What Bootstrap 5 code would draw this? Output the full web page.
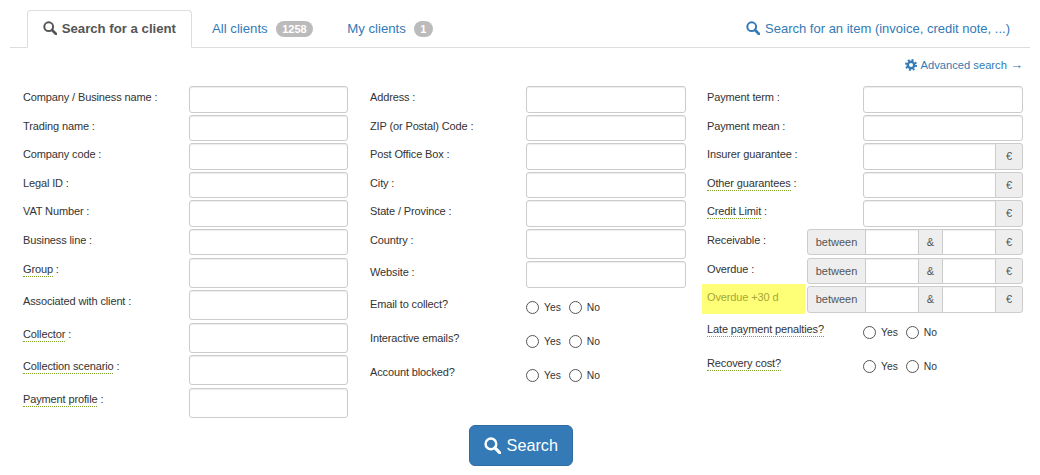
<!DOCTYPE html>
<html lang="en">
<head>
  <meta charset="UTF-8">
  <title>Search for a client</title>
  <link href="https://cdn.jsdelivr.net/npm/bootstrap@5.3.3/dist/css/bootstrap.min.css" rel="stylesheet">
  <style>
    body { font-family: "Liberation Sans", Arial, sans-serif; font-size: 12px; color: #333; background: #fff; }
    a { text-decoration: none; }
    .page-wrap { padding: 10px 10px 0; }

    .client-tabs { padding-left: 17px; border-bottom: 1px solid #ddd; font-size: 13.2px; height: 38px; }
    .client-tabs .nav-link { padding: 9px 15px 11px; line-height: 18px; height: 38px; color: #337ab7; margin: 0 2px 0 0; border-radius: 4px 4px 0 0; }
    .client-tabs .nav-link.active { color: #555; font-weight: 700; border-color: #ddd #ddd #fff; margin-right: 4px; }
    .client-tabs .item-link { margin-right: 0; padding-right: 19px; font-size: 13px; }
    .count-pill { background: #bbb; color: #fff; font-size: 11px; font-weight: 700; padding: 2px 6.5px; border-radius: 8px; line-height: 12px; display: inline-block; margin-left: 8px; vertical-align: 0; }
    .tab-ico { width: 14px; height: 14px; vertical-align: -2px; margin-right: 1px; }

    .adv-row { text-align: right; font-size: 11.2px; line-height: 14px; padding: 10px 7px 0 0; height: 38px; }
    .adv-row a { color: #337ab7; }
    .adv-arrow { font-size: 13px; line-height: 12px; }
    .gear-ico { width: 12px; height: 12px; vertical-align: -2px; margin-right: 1px; }

    .form-cols { display: flex; }
    .col-a { width: 347px; padding-left: 13px; padding-right: 9px; }
    .col-b { width: 337px; padding-left: 13px; padding-right: 8px; }
    .col-c { width: 326px; padding-left: 13px; }

    .fld-row { display: flex; margin-bottom: 2.1px; height: 26.5px; }
    .fld-row.tall { height: 30.25px; margin-bottom: 2.25px; }
    .col-a .fld-lbl { width: 166px; }
    .col-b .fld-lbl, .col-c .fld-lbl { width: 156px; }
    .col-c .fld-lbl.short { width: 100px; }
    .fld-lbl { flex: none; padding-top: 4px; line-height: 14px; font-size: 11px; letter-spacing: -.13px; color: #333; }
    .fld-row .form-control { height: 100%; padding: 2px 6px; font-size: 12px; border-color: #ccc; border-radius: 3px; box-shadow: inset 0 1px 1px rgba(0,0,0,.075); min-height: 0; }
    .fld-box { width: 160px; flex: none; }
    .col-a .fld-box { width: 159px; }
    .dot-tip { border-bottom: 1px dotted #7fa52a; padding-bottom: 1px; }

    .input-group { height: 100%; flex-wrap: nowrap; }
    .input-group-text { background: #eee; color: #555; border-color: #ccc; font-size: 11px; padding: 0; justify-content: center; border-radius: 3px; }
    .euro-cell { width: 28px; flex: none; }
    .btw-cell { width: 59px; flex: none; }
    .and-cell { width: 25px; flex: none; }
    .range-box { width: 216px; flex: none; }
    .col-c .fld-lbl.yellow-lbl { background: #ffff77; color: #a6a63a; margin-left: -5px; padding-left: 5px; width: 103px; margin-right: 2px; margin-top: -2.5px; height: 30px; padding-top: 6px; }

    .radio-row { display: flex; height: 34px; }
    .radio-row .fld-lbl { padding-top: 0; }
    .radio-set { display: flex; align-items: center; height: 14px; margin-top: 4px; font-size: 10.3px; }
    .radio-set .form-check-input { width: 13px; height: 13px; margin: 0 5px 0 0; border: 1px solid #555; }
    .radio-set span { margin-right: 8px; }

    .first-radio { margin-top: 9px; }

    .submit-row { text-align: center; margin-top: 4.5px; }
    .go-btn { width: 104px; height: 41px; font-size: 16.2px; padding: 0; background: #337ab7; border-color: #2e6da4; border-radius: 6px; margin-left: 2px; }
    .go-ico { width: 17px; height: 17px; vertical-align: -3px; margin-right: 1px; }
  </style>
</head>
<body>
<div class="page-wrap">

  <ul class="nav nav-tabs client-tabs">
    <li class="nav-item">
      <a class="nav-link active" href="#">
        <svg class="tab-ico" viewBox="0 0 14 14"><circle cx="5.7" cy="5.7" r="4.4" fill="none" stroke="#555" stroke-width="2"/><path d="M9 9l4 4" stroke="#555" stroke-width="2.6" stroke-linecap="round"/></svg>
        Search for a client</a>
    </li>
    <li class="nav-item"><a class="nav-link" href="#">All clients<span class="count-pill">1258</span></a></li>
    <li class="nav-item"><a class="nav-link" href="#">My clients<span class="count-pill">1</span></a></li>
    <li class="nav-item ms-auto">
      <a class="nav-link item-link" href="#">
        <svg class="tab-ico" viewBox="0 0 14 14"><circle cx="5.7" cy="5.7" r="4.4" fill="none" stroke="#337ab7" stroke-width="2"/><path d="M9 9l4 4" stroke="#337ab7" stroke-width="2.6" stroke-linecap="round"/></svg>
        Search for an item (invoice, credit note, ...)</a>
    </li>
  </ul>

  <div class="adv-row">
    <a href="#">
      <svg class="gear-ico" viewBox="0 0 12 12"><circle cx="6" cy="6" r="3.2" fill="none" stroke="#337ab7" stroke-width="2.4"/><circle cx="6" cy="6" r="5" fill="none" stroke="#337ab7" stroke-width="2" stroke-dasharray="1.93 2"/></svg>
      Advanced search <span class="adv-arrow">&#8594;</span></a>
  </div>

  <form class="form-cols">
    <div class="col-a">
      <div class="fld-row"><div class="fld-lbl">Company / Business name :</div><div class="fld-box"><input class="form-control"></div></div>
      <div class="fld-row"><div class="fld-lbl">Trading name :</div><div class="fld-box"><input class="form-control"></div></div>
      <div class="fld-row"><div class="fld-lbl">Company code :</div><div class="fld-box"><input class="form-control"></div></div>
      <div class="fld-row"><div class="fld-lbl">Legal ID :</div><div class="fld-box"><input class="form-control"></div></div>
      <div class="fld-row"><div class="fld-lbl">VAT Number :</div><div class="fld-box"><input class="form-control"></div></div>
      <div class="fld-row"><div class="fld-lbl">Business line :</div><div class="fld-box"><input class="form-control"></div></div>
      <div class="fld-row tall"><div class="fld-lbl"><span class="dot-tip">Group</span> :</div><div class="fld-box"><input class="form-control"></div></div>
      <div class="fld-row tall"><div class="fld-lbl">Associated with client :</div><div class="fld-box"><input class="form-control"></div></div>
      <div class="fld-row tall"><div class="fld-lbl"><span class="dot-tip">Collector</span> :</div><div class="fld-box"><input class="form-control"></div></div>
      <div class="fld-row tall"><div class="fld-lbl"><span class="dot-tip">Collection scenario</span> :</div><div class="fld-box"><input class="form-control"></div></div>
      <div class="fld-row tall"><div class="fld-lbl"><span class="dot-tip">Payment profile</span> :</div><div class="fld-box"><input class="form-control"></div></div>
    </div>

    <div class="col-b">
      <div class="fld-row"><div class="fld-lbl">Address :</div><div class="fld-box"><input class="form-control"></div></div>
      <div class="fld-row"><div class="fld-lbl">ZIP (or Postal) Code :</div><div class="fld-box"><input class="form-control"></div></div>
      <div class="fld-row"><div class="fld-lbl">Post Office Box :</div><div class="fld-box"><input class="form-control"></div></div>
      <div class="fld-row"><div class="fld-lbl">City :</div><div class="fld-box"><input class="form-control"></div></div>
      <div class="fld-row"><div class="fld-lbl">State / Province :</div><div class="fld-box"><input class="form-control"></div></div>
      <div class="fld-row tall"><div class="fld-lbl">Country :</div><div class="fld-box"><input class="form-control"></div></div>
      <div class="fld-row"><div class="fld-lbl">Website :</div><div class="fld-box"><input class="form-control"></div></div>
      <div class="radio-row first-radio"><div class="fld-lbl">Email to collect?</div><div class="radio-set"><input class="form-check-input" type="radio"><span>Yes</span><input class="form-check-input" type="radio"><span>No</span></div></div>
      <div class="radio-row"><div class="fld-lbl">Interactive emails?</div><div class="radio-set"><input class="form-check-input" type="radio"><span>Yes</span><input class="form-check-input" type="radio"><span>No</span></div></div>
      <div class="radio-row"><div class="fld-lbl">Account blocked?</div><div class="radio-set"><input class="form-check-input" type="radio"><span>Yes</span><input class="form-check-input" type="radio"><span>No</span></div></div>
    </div>

    <div class="col-c">
      <div class="fld-row"><div class="fld-lbl">Payment term :</div><div class="fld-box"><input class="form-control"></div></div>
      <div class="fld-row"><div class="fld-lbl">Payment mean :</div><div class="fld-box"><input class="form-control"></div></div>
      <div class="fld-row"><div class="fld-lbl">Insurer guarantee :</div><div class="fld-box"><div class="input-group"><input class="form-control"><span class="input-group-text euro-cell">&euro;</span></div></div></div>
      <div class="fld-row"><div class="fld-lbl"><span class="dot-tip">Other guarantees</span> :</div><div class="fld-box"><div class="input-group"><input class="form-control"><span class="input-group-text euro-cell">&euro;</span></div></div></div>
      <div class="fld-row"><div class="fld-lbl"><span class="dot-tip">Credit Limit</span> :</div><div class="fld-box"><div class="input-group"><input class="form-control"><span class="input-group-text euro-cell">&euro;</span></div></div></div>
      <div class="fld-row"><div class="fld-lbl short">Receivable :</div><div class="range-box"><div class="input-group"><span class="input-group-text btw-cell">between</span><input class="form-control"><span class="input-group-text and-cell">&amp;</span><input class="form-control"><span class="input-group-text euro-cell">&euro;</span></div></div></div>
      <div class="fld-row"><div class="fld-lbl short">Overdue :</div><div class="range-box"><div class="input-group"><span class="input-group-text btw-cell">between</span><input class="form-control"><span class="input-group-text and-cell">&amp;</span><input class="form-control"><span class="input-group-text euro-cell">&euro;</span></div></div></div>
      <div class="fld-row"><div class="fld-lbl short yellow-lbl">Overdue +30 d</div><div class="range-box"><div class="input-group"><span class="input-group-text btw-cell">between</span><input class="form-control"><span class="input-group-text and-cell">&amp;</span><input class="form-control"><span class="input-group-text euro-cell">&euro;</span></div></div></div>
      <div class="radio-row first-radio"><div class="fld-lbl"><span class="dot-tip">Late payment penalties?</span></div><div class="radio-set"><input class="form-check-input" type="radio"><span>Yes</span><input class="form-check-input" type="radio"><span>No</span></div></div>
      <div class="radio-row"><div class="fld-lbl"><span class="dot-tip">Recovery cost?</span></div><div class="radio-set"><input class="form-check-input" type="radio"><span>Yes</span><input class="form-check-input" type="radio"><span>No</span></div></div>
    </div>
  </form>

  <div class="submit-row">
    <button type="button" class="btn btn-primary go-btn">
      <svg class="go-ico" viewBox="0 0 14 14"><circle cx="5.7" cy="5.7" r="4.4" fill="none" stroke="#fff" stroke-width="2"/><path d="M9 9l4 4" stroke="#fff" stroke-width="2.6" stroke-linecap="round"/></svg>
      Search</button>
  </div>
</div>
<script src="https://cdn.jsdelivr.net/npm/bootstrap@5.3.3/dist/js/bootstrap.bundle.min.js"></script>
</body>
</html>
